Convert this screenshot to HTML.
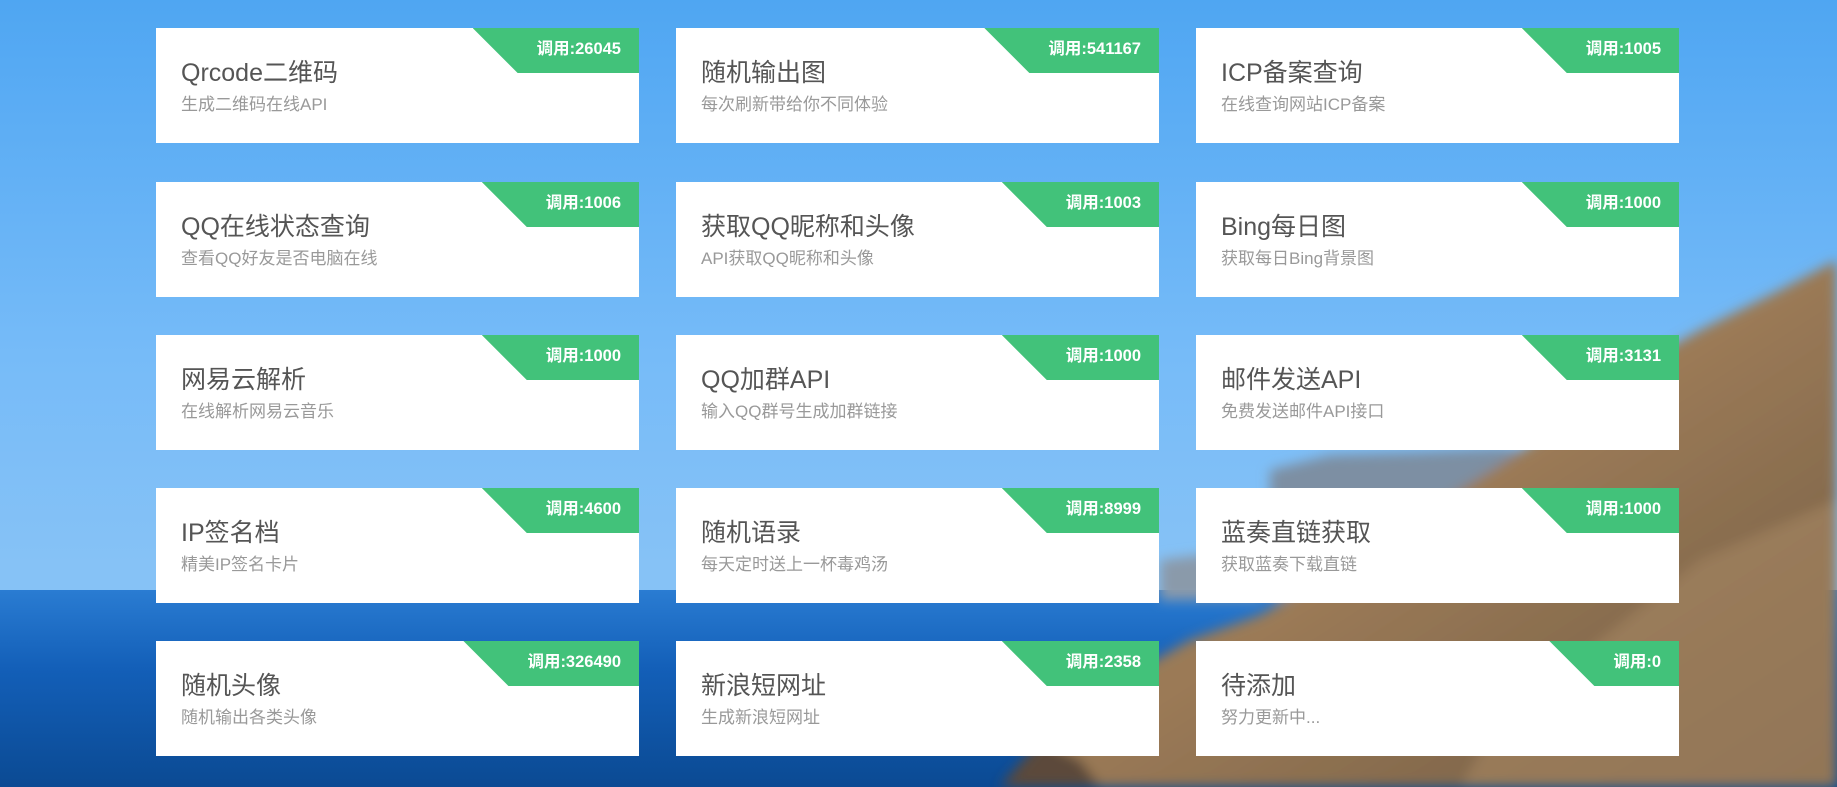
<!DOCTYPE html>
<html><head><meta charset="utf-8"><style>
html,body{margin:0;padding:0;width:1837px;height:787px;overflow:hidden;font-family:"Liberation Sans","Noto Sans CJK SC",sans-serif}
#bg{position:absolute;left:0;top:0}
.card{position:absolute;width:483px;height:115px;background:#fff;overflow:hidden}
.t{position:absolute;left:25px;top:25px;font-size:25px;color:#555;white-space:nowrap}
.s{position:absolute;left:25px;top:62px;font-size:17px;color:#999;white-space:nowrap}
.b{position:absolute;right:0;top:0;height:45px;line-height:42px;background:#42c27a;color:#fff;font-weight:bold;font-size:16.5px;padding:0 18px 0 64px;clip-path:polygon(0 0,100% 0,100% 100%,45px 100%)}
</style></head><body>
<svg id="bg" width="1837" height="787" viewBox="0 0 1837 787">
<defs>
<linearGradient id="sky" x1="0" y1="0" x2="0" y2="1">
<stop offset="0" stop-color="#4fa6f2"/><stop offset="0.45" stop-color="#76bbf8"/><stop offset="0.72" stop-color="#86c2f6"/></linearGradient>
<linearGradient id="sea" x1="0" y1="0" x2="0" y2="1">
<stop offset="0" stop-color="#2a7cd2"/><stop offset="0.4" stop-color="#135fb8"/><stop offset="1" stop-color="#0b4a93"/></linearGradient>
<linearGradient id="rock" x1="0" y1="0" x2="1" y2="1">
<stop offset="0" stop-color="#8a7a68"/><stop offset="0.5" stop-color="#9b7a56"/><stop offset="1" stop-color="#6e5a44"/></linearGradient>
<filter id="bl"><feGaussianBlur stdDeviation="6"/></filter>
</defs>
<rect width="1837" height="787" fill="url(#sky)"/>
<rect y="590" width="1837" height="197" fill="url(#sea)"/>
<g filter="url(#bl)">
<path d="M1270 470 L1330 455 L1420 452 L1500 448 L1560 455 L1560 600 L1270 600Z" fill="#7d8fa3"/>
<path d="M1160 560 L1200 555 L1260 560 L1260 600 L1160 600Z" fill="#8a9aaa"/>
<path d="M1837 260 L1780 290 L1700 330 L1620 375 L1560 425 L1500 465 L1420 515 L1330 575 L1260 615 L1190 640 L1120 680 L1060 730 L1020 787 L1837 787Z" fill="url(#rock)"/>
<path d="M1837 500 L1700 560 L1600 640 L1500 720 L1460 787 L1837 787Z" fill="#a18260" opacity="0.7"/>
<path d="M1000 787 L1040 740 L1080 760 L1100 787Z" fill="#5c4a3a"/>
</g>
</svg>

<div class="card" style="left:156px;top:28px"><div class="b">调用:26045</div><div class="t">Qrcode二维码</div><div class="s">生成二维码在线API</div></div>
<div class="card" style="left:676px;top:28px"><div class="b">调用:541167</div><div class="t">随机输出图</div><div class="s">每次刷新带给你不同体验</div></div>
<div class="card" style="left:1196px;top:28px"><div class="b">调用:1005</div><div class="t">ICP备案查询</div><div class="s">在线查询网站ICP备案</div></div>

<div class="card" style="left:156px;top:182px"><div class="b">调用:1006</div><div class="t">QQ在线状态查询</div><div class="s">查看QQ好友是否电脑在线</div></div>
<div class="card" style="left:676px;top:182px"><div class="b">调用:1003</div><div class="t">获取QQ昵称和头像</div><div class="s">API获取QQ昵称和头像</div></div>
<div class="card" style="left:1196px;top:182px"><div class="b">调用:1000</div><div class="t">Bing每日图</div><div class="s">获取每日Bing背景图</div></div>

<div class="card" style="left:156px;top:335px"><div class="b">调用:1000</div><div class="t">网易云解析</div><div class="s">在线解析网易云音乐</div></div>
<div class="card" style="left:676px;top:335px"><div class="b">调用:1000</div><div class="t">QQ加群API</div><div class="s">输入QQ群号生成加群链接</div></div>
<div class="card" style="left:1196px;top:335px"><div class="b">调用:3131</div><div class="t">邮件发送API</div><div class="s">免费发送邮件API接口</div></div>

<div class="card" style="left:156px;top:488px"><div class="b">调用:4600</div><div class="t">IP签名档</div><div class="s">精美IP签名卡片</div></div>
<div class="card" style="left:676px;top:488px"><div class="b">调用:8999</div><div class="t">随机语录</div><div class="s">每天定时送上一杯毒鸡汤</div></div>
<div class="card" style="left:1196px;top:488px"><div class="b">调用:1000</div><div class="t">蓝奏直链获取</div><div class="s">获取蓝奏下载直链</div></div>

<div class="card" style="left:156px;top:641px"><div class="b">调用:326490</div><div class="t">随机头像</div><div class="s">随机输出各类头像</div></div>
<div class="card" style="left:676px;top:641px"><div class="b">调用:2358</div><div class="t">新浪短网址</div><div class="s">生成新浪短网址</div></div>
<div class="card" style="left:1196px;top:641px"><div class="b">调用:0</div><div class="t">待添加</div><div class="s">努力更新中...</div></div>
</body></html>
